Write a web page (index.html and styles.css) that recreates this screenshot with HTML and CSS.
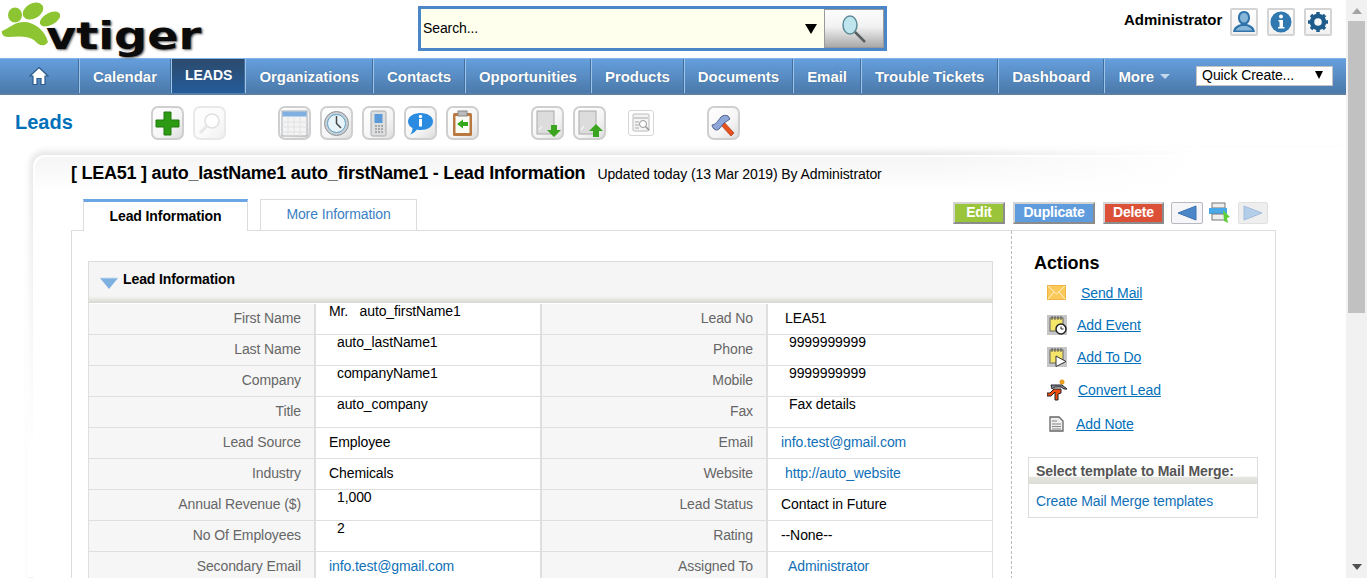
FILE: index.html
```html
<!DOCTYPE html>
<html lang="en">

<head>
    <meta charset="UTF-8">
    <meta name="viewport" content="width=device-width, initial-scale=1.0">
    <title>Leads - vtiger CRM</title>
    <link rel="stylesheet" href="styles.css">
</head>

<body>
    <div class="shell">
        <div class="main">
            <header class="top">
                <a class="logo">
                    <svg class="paw" width="60" height="50" viewBox="0 0 60 50">
                        <ellipse cx="15" cy="15" rx="7" ry="7.500" fill="#8cc432"/>
                        <ellipse cx="33" cy="11" rx="7.500" ry="11" fill="#8cc432" transform="rotate(60 33 11)"/>
                        <ellipse cx="50" cy="19" rx="6" ry="11" fill="#8cc432" transform="rotate(62 50 19)"/>
                        <path d="M2 31C10 28 14 22 24 22C34 22 45 30 48 42C44 48 38 45 34 40C26 35 16 37 8 37C4 37 1 34 2 31Z" fill="#8cc432"/>
                    </svg>
                    <span class="logo-text">vtiger</span>
                </a>
                <div class="search">
                    <span class="search-text">Search...</span>
                    <span class="search-arrow"></span>
                    <button class="search-btn">
                        <svg width="24" height="28" viewBox="0 0 24 28">
                            <ellipse cx="8" cy="10" rx="7" ry="9" fill="#bfe6ee" stroke="#5d8b98" stroke-width="1.500"/>
                            <path d="M13 17L23 27" stroke="#55605f" stroke-width="2.500"/>
                        </svg>
                    </button>
                </div>
                <div class="user">
                    <span class="user-name">Administrator</span>
                    <a class="user-icon">
                        <svg width="24" height="24" viewBox="0 0 24 24">
                            <path d="M12 1C17 1 18 5 18 8C18 11 16.500 13 15 14C18 15 22 16 23 22H1C2 16 6 15 9 14C7.500 13 6 11 6 8C6 5 7 1 12 1Z" fill="#2f73aa"/>
                            <path d="M12 3C15 3 16 5.500 16 8C16 10.500 14 12.500 12 12.500C10 12.500 8 10.500 8 8C8 5.500 9 3 12 3Z" fill="#86b6d8"/>
                            <path d="M3.500 20.500C4.500 18 7 17 9.500 16H14.500C17 17 19.500 18 20.500 20.500Z" fill="#86b6d8"/>
                        </svg>
                    </a>
                    <a class="user-icon">
                        <svg width="22" height="22" viewBox="0 0 22 22">
                            <circle cx="11" cy="11" r="10.500" fill="#2f78b0"/>
                            <circle cx="11" cy="5.500" r="2" fill="#fff"/>
                            <path d="M8.500 9H13V16H14.500V17.500H8V16H9.500V10.500H8.500Z" fill="#fff"/>
                        </svg>
                    </a>
                    <a class="user-icon">
                        <svg width="22" height="22" viewBox="0 0 22 22">
                            <circle cx="11" cy="11" r="6" fill="none" stroke="#1f5c8c" stroke-width="4.500"/>
                            <path d="M11 1V21M1 11H21M4 4L18 18M18 4L4 18" stroke="#1f5c8c" stroke-width="3.500" stroke-dasharray="4 12 4 0"/>
                        </svg>
                    </a>
                </div>
            </header>

            <nav class="nav">
                <a class="nav-home">
                    <svg width="20" height="20" viewBox="0 0 20 20">
                        <path d="M10 1.500L19 10H16V18.500H12V12.500H8V18.500H4V10H1Z" fill="#fff" stroke="#2c5a8a" stroke-width="1.200"/>
                    </svg>
                </a>
                <a class="nav-item">Calendar</a>
                <a class="nav-item active">LEADS</a>
                <a class="nav-item">Organizations</a>
                <a class="nav-item">Contacts</a>
                <a class="nav-item">Opportunities</a>
                <a class="nav-item">Products</a>
                <a class="nav-item">Documents</a>
                <a class="nav-item">Email</a>
                <a class="nav-item">Trouble Tickets</a>
                <a class="nav-item">Dashboard</a>
                <a class="nav-item more">More <span class="caret"></span></a>
                <div class="quick">
                    <span>Quick Create...</span>
                    <span class="quick-arrow"></span>
                </div>
            </nav>

            <div class="toolbar">
                <h1 class="module">Leads</h1>
                <div class="tools">
                    <a class="tool">
                        <svg width="25" height="25" viewBox="0 0 25 25"><path d="M9 1H16V9H24V16H16V24H9V16H1V9H9Z" fill="#2c9a12" stroke="#1e7a0c"/></svg>
                    </a>
                    <a class="tool faded">
                        <svg width="25" height="25" viewBox="0 0 25 25"><circle cx="15" cy="10" r="7" fill="#fff" stroke="#bbb" stroke-width="1.500"/><path d="M10 15L3 22" stroke="#ccc" stroke-width="3"/></svg>
                    </a>
                </div>
                <div class="tools group-b">
                    <a class="tool">
                        <svg width="27" height="27" viewBox="0 0 27 27"><rect x="1" y="1" width="25" height="25" fill="#f4f4f4" stroke="#a8adb2"/><rect x="1.500" y="1.500" width="24" height="5" fill="#7fb0e0"/><path d="M1 12H26M1 17H26M1 22H26M7 7V26M13 7V26M19 7V26" stroke="#e2e2e2"/></svg>
                    </a>
                    <a class="tool">
                        <svg width="27" height="27" viewBox="0 0 27 27"><circle cx="13.500" cy="13.500" r="12" fill="#c9ced2" stroke="#8d949a"/><circle cx="13.500" cy="13.500" r="9" fill="#e8f4fa" stroke="#5ea2c8"/><path d="M13.500 6V13.500L18 18" fill="none" stroke="#444" stroke-width="1.500"/></svg>
                    </a>
                    <a class="tool">
                        <svg width="27" height="27" viewBox="0 0 27 27"><rect x="6" y="1" width="15" height="25" rx="1.500" fill="#dcdedf" stroke="#a8aaac"/><rect x="9.500" y="4" width="8" height="9" fill="#5a9ad8"/><path d="M10 16H12M13 16H15M16 16H18M10 19H12M13 19H15M16 19H18M10 22H12M13 22H15M16 22H18" stroke="#999" stroke-width="1.500"/></svg>
                    </a>
                    <a class="tool">
                        <svg width="27" height="27" viewBox="0 0 27 27"><path d="M13.500 3C20.500 3 26 6.500 26 11.500C26 16.500 20.500 20 13.500 20C12 20 11 20 10 19.500C8 22 5.500 24 3 24.500C5 22.500 5.500 20 5.500 18C2.500 16.500 1 14 1 11.500C1 6.500 6.500 3 13.500 3Z" fill="#2b8be0"/><rect x="12" y="9" width="3" height="7.500" fill="#fff"/><circle cx="13.500" cy="6.500" r="1.700" fill="#fff"/></svg>
                    </a>
                    <a class="tool">
                        <svg width="27" height="27" viewBox="0 0 27 27"><rect x="4" y="3" width="19" height="23" rx="1.500" fill="#b9783f"/><rect x="6.500" y="6" width="14" height="17" fill="#fbfbf4"/><rect x="9" y="1" width="9" height="5" fill="#bbb" stroke="#888"/><path d="M8 14L14 9.500V12H19V16H14V18.500Z" fill="#35a81c"/></svg>
                    </a>
                </div>
                <div class="tools group-c">
                    <a class="tool">
                        <svg width="27" height="27" viewBox="0 0 27 27"><rect x="3" y="1" width="17" height="23" fill="#dcdcdc" stroke="#aaa"/><path d="M5 20L8 16" stroke="#fff"/><path d="M17 15H23V20H27L20 27L13 20H17Z" fill="#3ba51f"/></svg>
                    </a>
                    <a class="tool">
                        <svg width="27" height="27" viewBox="0 0 27 27"><rect x="3" y="1" width="17" height="23" fill="#dcdcdc" stroke="#aaa"/><path d="M5 20L8 16" stroke="#fff"/><path d="M20 14L27 21H23V27H17V21H13Z" fill="#3ba51f"/></svg>
                    </a>
                </div>
                <a class="tool-plain">
                    <svg width="20" height="20" viewBox="0 0 20 20"><rect x="2" y="1" width="16" height="17" rx="1" fill="#f4f4f4" stroke="#bbb"/><path d="M3 5H17M4 9H8M4 12H8M4 15H8" stroke="#aaa"/><circle cx="12" cy="11" r="3.500" fill="#fff" stroke="#999"/><path d="M14.500 13.500L18 17" stroke="#999" stroke-width="1.500"/></svg>
                </a>
                <a class="tool group-d">
                    <svg width="27" height="27" viewBox="0 0 27 27"><path d="M13 11L24 23L21 26L10 14Z" fill="#e8501e" stroke="#a83a14" stroke-width=".7"/><path d="M2 15C5 15 8 11 11 7C13 5 16 5 18 6L20 9L14 13L9 19C7 21 3 20 2 15Z" fill="#8ea6d8" stroke="#50608c"/></svg>
                </a>
            </div>

            <div class="panel-shade">
                <section class="panel">
                    <div class="record-title">
                        <h2 class="record-name">[ LEA51 ] auto_lastName1 auto_firstName1 - Lead Information</h2>
                        <span class="record-updated">Updated today (13 Mar 2019) By Administrator</span>
                    </div>

                    <div class="tabrow">
                        <a class="tab active">Lead Information</a>
                        <a class="tab">More Information</a>
                        <div class="rec-actions">
                            <button class="crm-btn green">Edit</button>
                            <button class="crm-btn blue">Duplicate</button>
                            <button class="crm-btn red">Delete</button>
                            <a class="pager">
                                <svg width="20" height="16" viewBox="0 0 20 16"><path d="M1 8L19 1V15Z" fill="#4a86c8" stroke="#3a72b2"/></svg>
                            </a>
                            <svg class="print-icon" width="21" height="22" viewBox="0 0 21 22"><rect x="3" y="1" width="13" height="5" fill="#eee" stroke="#777"/><rect x="0" y="6" width="18" height="6" fill="#49a8e8"/><rect x="3" y="12" width="13" height="6" fill="#eee" stroke="#777"/><path d="M14 8L21 15L18 16L19 21L15 19Z" fill="#5fd03a"/></svg>
                            <a class="pager off">
                                <svg width="20" height="16" viewBox="0 0 20 16"><path d="M19 8L1 1V15Z" fill="#b4cde8" stroke="#a0bcdc"/></svg>
                            </a>
                        </div>
                    </div>

                    <div class="detail">
                        <div class="detail-left">
                            <div class="block-head">
                                <svg width="18" height="12" viewBox="0 0 18 12"><path d="M0 1H18L9 12Z" fill="#7db0de"/><path d="M1 1H17" stroke="#c4dcf0"/></svg>
                                <span>Lead Information</span>
                            </div>
                            <table class="fields">
                                <colgroup>
                                    <col class="c1">
                                    <col class="c2">
                                    <col class="c3">
                                    <col class="c4">
                                </colgroup>
                                <tr>
                                    <td class="lbl first">First Name</td>
                                    <td class="val raw title-val">Mr. &nbsp; auto_firstName1</td>
                                    <td class="lbl">Lead No</td>
                                    <td class="val end pad4">LEA51</td>
                                </tr>
                                <tr>
                                    <td class="lbl first">Last Name</td>
                                    <td class="val raw">auto_lastName1</td>
                                    <td class="lbl">Phone</td>
                                    <td class="val raw end">9999999999</td>
                                </tr>
                                <tr>
                                    <td class="lbl first">Company</td>
                                    <td class="val raw">companyName1</td>
                                    <td class="lbl">Mobile</td>
                                    <td class="val raw end">9999999999</td>
                                </tr>
                                <tr>
                                    <td class="lbl first">Title</td>
                                    <td class="val raw">auto_company</td>
                                    <td class="lbl">Fax</td>
                                    <td class="val raw end">Fax details</td>
                                </tr>
                                <tr>
                                    <td class="lbl first">Lead Source</td>
                                    <td class="val">Employee</td>
                                    <td class="lbl">Email</td>
                                    <td class="val end"><a class="link">info.test@gmail.com</a></td>
                                </tr>
                                <tr>
                                    <td class="lbl first">Industry</td>
                                    <td class="val">Chemicals</td>
                                    <td class="lbl">Website</td>
                                    <td class="val end pad4"><a class="link">http://auto_website</a></td>
                                </tr>
                                <tr>
                                    <td class="lbl first">Annual Revenue ($)</td>
                                    <td class="val raw">1,000</td>
                                    <td class="lbl">Lead Status</td>
                                    <td class="val end">Contact in Future</td>
                                </tr>
                                <tr>
                                    <td class="lbl first">No Of Employees</td>
                                    <td class="val raw">2</td>
                                    <td class="lbl">Rating</td>
                                    <td class="val end">--None--</td>
                                </tr>
                                <tr>
                                    <td class="lbl first">Secondary Email</td>
                                    <td class="val"><a class="link">info.test@gmail.com</a></td>
                                    <td class="lbl">Assigned To</td>
                                    <td class="val end pad7"><a class="link">Administrator</a></td>
                                </tr>
                            </table>
                        </div>

                        <aside class="detail-right">
                            <h3 class="actions-title">Actions</h3>
                            <ul class="actions">
                                <li class="act-mail">
                                    <svg width="19" height="16" viewBox="0 0 19 16"><rect x=".5" y=".5" width="18" height="14" fill="#fbc95a" stroke="#eeb544"/><path d="M1 1L9.500 9L18 1M1 14L7 7M18 14L12 7" fill="none" stroke="#fff3cf"/></svg>
                                    <a>Send Mail</a>
                                </li>
                                <li>
                                    <svg width="20" height="20" viewBox="0 0 20 20"><rect width="20" height="20" fill="#c6c6c6"/><rect x="3" y="3" width="13" height="13" fill="#f5e66a" stroke="#666"/><path d="M5 1V5M8 1V5M11 1V5M14 1V5" stroke="#555"/><circle cx="14" cy="14" r="5" fill="#fff" stroke="#222" stroke-width="1.500"/><path d="M14 11.500V14H16.500" fill="none" stroke="#222"/></svg>
                                    <a>Add Event</a>
                                </li>
                                <li>
                                    <svg width="20" height="20" viewBox="0 0 20 20"><rect width="20" height="20" fill="#c6c6c6"/><rect x="3" y="3" width="13" height="13" fill="#f5e66a" stroke="#666"/><path d="M5 1V5M8 1V5M11 1V5M14 1V5" stroke="#555"/><path d="M9 9L19 14.500L9 19.500Z" fill="#fff" stroke="#333"/></svg>
                                    <a>Add To Do</a>
                                </li>
                                <li class="act-convert">
                                    <svg width="21" height="22" viewBox="0 0 21 22"><circle cx="15" cy="3" r="2.500" fill="#e8a020"/><path d="M4 6H15L20 10H17L14 8H8L5 10Z" fill="#889" stroke="#222"/><path d="M7 10H14V14L11 15V21H8V13L4 17H0V14H3Z" fill="#f04c10" stroke="#222"/></svg>
                                    <a>Convert Lead</a>
                                </li>
                                <li class="act-note">
                                    <svg width="15" height="16" viewBox="0 0 15 16"><path d="M1 1H10L14 5V15H1Z" fill="#eee" stroke="#666" stroke-width="1.300"/><path d="M3 5H8M3 8H12M3 10.500H12M3 13H12" stroke="#888"/></svg>
                                    <a>Add Note</a>
                                </li>
                            </ul>
                            <div class="merge">
                                <div class="merge-head">Select template to Mail Merge:</div>
                                <a class="merge-link">Create Mail Merge templates</a>
                            </div>
                        </aside>
                    </div>
                </section>
            </div>
        </div>

        <div class="scrollbar">
            <span class="sb-up"></span>
            <span class="sb-thumb"></span>
            <span class="sb-space"></span>
            <span class="sb-down"></span>
        </div>
    </div>
</body>

</html>
```

FILE: styles.css
```css
html, body {
    margin: 0;
    padding: 0;
    height: 100%;
    overflow: hidden;
}

body {
    font-family: "Liberation Sans", Arial, sans-serif;
    font-size: 14px;
    letter-spacing: -0.1px;
    color: #000;
    background-color: #fff;
}

a {
    cursor: pointer;
}

.shell {
    display: flex;
    height: 578px;
}

.main {
    width: 1346px;
    flex: none;
    overflow: hidden;
}

/* top strip */
.top {
    display: flex;
    height: 58px;
}

.logo {
    display: block;
    width: 418px;
    height: 58px;
    position: relative;
}

.paw {
    display: block;
}

.logo-text {
    position: absolute;
    left: 46px;
    top: 15px;
    font-family: "DejaVu Sans", sans-serif;
    font-weight: bold;
    font-size: 37px;
    line-height: 44px;
    letter-spacing: 0;
    color: #0b0b0b;
    transform: scaleX(1.25);
    transform-origin: left center;
    text-shadow: 1px 1px 2px #555;
}

.search {
    display: flex;
    align-items: center;
    box-sizing: border-box;
    width: 469px;
    height: 45px;
    margin-top: 6px;
    border: 3px solid #4a86c8;
    background-color: #ffffee;
}

.search-text {
    flex: 1;
    padding: 0 0 2px 2px;
}

.search-arrow {
    width: 0;
    height: 0;
    border-left: 6px solid transparent;
    border-right: 6px solid transparent;
    border-top: 10px solid #000;
    margin-right: 7px;
}

.search-btn {
    display: flex;
    align-items: center;
    justify-content: center;
    box-sizing: content-box;
    width: 58px;
    height: 37px;
    padding: 0;
    margin: 0;
    border: 1px solid #999;
    background: linear-gradient(#fdfdfd, #f2f2f2 45%, #a9a9a9);
}

.user {
    display: flex;
    align-items: flex-start;
    padding: 8px 0 0 237px;
    gap: 9px;
}

.user-name {
    font-size: 15px;
    font-weight: bold;
    line-height: 24px;
    letter-spacing: 0;
    white-space: nowrap;
    margin-right: -1px;
}

.user-icon {
    display: flex;
    align-items: center;
    justify-content: center;
    box-sizing: border-box;
    width: 28px;
    height: 28px;
    border: 2px solid #d4d4d4;
    border-radius: 2px;
    background: linear-gradient(#fff, #f1f1f1);
}

/* main menu */
.nav {
    display: flex;
    height: 37px;
    box-sizing: border-box;
    border-top: 1px solid #7fb4ea;
    border-bottom: 2px solid #5c7fa5;
    background: linear-gradient(#659fdd, #4b79aa);
}

.nav-home {
    display: flex;
    align-items: center;
    justify-content: center;
    width: 78px;
    box-sizing: border-box;
}

.nav-item {
    display: flex;
    align-items: center;
    padding: 0 13px;
    border-left: 1px solid #9fc4ea;
    box-shadow: -1px 0 0 #3f6e9f;
    margin-left: 1px;
    font-size: 15px;
    font-weight: bold;
    letter-spacing: -0.03px;
    color: #fff;
    text-shadow: 0 0 1px #33597f;
    white-space: nowrap;
}

.nav-item.active {
    padding: 0 12px 2px 13px;
    font-size: 14px;
    letter-spacing: 0;
    background: linear-gradient(#2c4a6c, #245c9a);
}

.caret {
    display: inline-block;
    width: 0;
    height: 0;
    margin-left: 6px;
    border-left: 5px solid transparent;
    border-right: 5px solid transparent;
    border-top: 5px solid #c4d8ec;
}

.quick {
    display: flex;
    align-items: center;
    justify-content: space-between;
    box-sizing: border-box;
    width: 137px;
    height: 20px;
    margin: 7px 0 0 13px;
    padding: 0 9px 2px 5px;
    border: 1px solid #c4c4c4;
    background-color: #fff;
    font-size: 14px;
}

.quick-arrow {
    width: 0;
    height: 0;
    border-left: 4px solid transparent;
    border-right: 4px solid transparent;
    border-top: 8px solid #000;
}

/* icon toolbar */
.toolbar {
    display: flex;
    align-items: flex-start;
    box-sizing: border-box;
    height: 52px;
    padding: 11px 0 0 15px;
}

.module {
    width: 136px;
    margin: 0;
    padding-top: 5px;
    font-size: 20px;
    line-height: 23px;
    font-weight: bold;
    letter-spacing: 0;
    color: #0070ba;
}

.tools {
    display: flex;
    gap: 9px;
}

.group-b,
.group-c {
    margin-left: 52px;
}

.tool {
    display: flex;
    align-items: center;
    justify-content: center;
    box-sizing: border-box;
    width: 33px;
    height: 34px;
    border: 2px solid #cfcfcf;
    border-radius: 7px;
    background: linear-gradient(135deg, #fff, #f5f5f5 60%, #dedede);
}

.tool.faded {
    opacity: 0.45;
}

.tool-plain {
    display: flex;
    align-items: center;
    justify-content: center;
    box-sizing: border-box;
    width: 26px;
    height: 26px;
    margin: 4px 0 0 22px;
    border: 1px solid #d6d6d6;
    border-radius: 3px;
}

.group-d {
    margin-left: 53px;
}

/* record panel */
.panel-shade {
    position: relative;
    padding: 8px 0 0 6px;
    margin-left: 27px;
}

/* shadow dies out toward the right and downward */
.panel-shade::after {
    content: "";
    position: absolute;
    top: 0;
    right: 0;
    width: 420px;
    height: 44px;
    background: linear-gradient(to right, rgba(255, 255, 255, 0), #fff 65%);
}

.panel-shade::before {
    content: "";
    position: absolute;
    top: 30px;
    left: 0;
    width: 6px;
    height: 400px;
    z-index: 1;
    background: linear-gradient(rgba(255, 255, 255, 0), #fff 70%);
}

.panel {
    box-sizing: border-box;
    height: 500px;
    padding: 6px 70px 0 36px;
    border: 2px solid #fff;
    border-bottom: 0;
    border-right: 0;
    border-radius: 12px 0 0 0;
    background: linear-gradient(#f5f5f5, #fff 36px);
    box-shadow: -1px -2px 6px 2px #e6e6e6;
}

.record-title {
    display: flex;
    align-items: baseline;
    gap: 12px;
    height: 21px;
    position: relative;
    z-index: 1;
}

.record-name {
    margin: 0;
    font-size: 18px;
    line-height: 21px;
    font-weight: bold;
    letter-spacing: -0.25px;
}

.tabrow {
    display: flex;
    align-items: flex-start;
    height: 32px;
    margin-top: 15px;
    padding-left: 12px;
    position: relative;
    z-index: 1;
}

.tab {
    display: flex;
    align-items: center;
    justify-content: center;
    box-sizing: border-box;
    width: 157px;
    height: 31px;
    margin-left: 12px;
    padding-bottom: 3px;
    border: 1px solid #dcdcdc;
    border-bottom: 0;
    color: #3a80c4;
    background-color: #fff;
}

.tab.active {
    width: 165px;
    height: 32px;
    margin-left: 0;
    padding-bottom: 2px;
    border-top: 3px solid #6aa5e6;
    color: #000;
    font-weight: bold;
    position: relative;
    z-index: 1;
}

.rec-actions {
    display: flex;
    align-items: center;
    margin: 3px 0 0 auto;
    padding-right: 8px;
    height: 22px;
}

.crm-btn {
    box-sizing: border-box;
    height: 22px;
    padding: 0 0 2px;
    margin-right: 8px;
    border: 2px solid;
    border-color: #d4d4d4 #8c8c8c #8c8c8c #d4d4d4;
    font-family: inherit;
    font-size: 14px;
    font-weight: bold;
    line-height: 16px;
    letter-spacing: -0.2px;
    color: #fff;
}

.green {
    width: 52px;
    background-color: #9ac53a;
}

.blue {
    width: 82px;
    background-color: #5f9cde;
}

.red {
    width: 61px;
    margin-right: 7px;
    background-color: #dc5038;
}

.pager {
    display: flex;
    align-items: center;
    justify-content: center;
    box-sizing: border-box;
    width: 32px;
    height: 22px;
    border: 1px solid #b8b8c0;
    border-radius: 2px;
    background: #f6f6f8;
}

.pager.off {
    width: 30px;
    border-color: #e0e0e0;
    background: #eeeeee;
}

.print-icon {
    margin: 0 8px 0 6px;
}

.detail {
    display: flex;
    box-sizing: border-box;
    height: 400px;
    margin-top: -1px;
    border: 1px solid #dcdcdc;
    background-color: #fff;
}

.detail-left {
    box-sizing: border-box;
    width: 940px;
    padding: 30px 17px 0 16px;
    border-right: 1px dashed #bbb;
}

.block-head {
    display: flex;
    align-items: flex-start;
    box-sizing: border-box;
    width: 905px;
    height: 43px;
    padding: 9px 0 0 11px;
    border: 1px solid #dcdcdc;
    border-bottom: 0;
    background: linear-gradient(#f5f5f5 80%, #f0f0ec 84%, #d8d8d2 97%, #fff 97%);
    font-weight: bold;
    line-height: 16px;
}

.block-head svg {
    margin: 6px 5px 0 0;
}

.fields {
    table-layout: fixed;
    width: 905px;
    border-collapse: separate;
    border-spacing: 0;
}

.c1 {
    width: 228px;
}

.c2, .c3 {
    width: 226px;
}

.c4 {
    width: 225px;
}

.fields td {
    box-sizing: border-box;
    height: 31px;
    padding: 0 0 2px;
    border-bottom: 1px solid #dfdfdf;
    white-space: nowrap;
}

.fields .lbl {
    padding-right: 13px;
    border-right: 2px solid #dfdfdf;
    background-color: #f6f6f6;
    color: #666;
    text-align: right;
}

.fields .first {
    border-left: 1px solid #dfdfdf;
}

.fields .val {
    padding-left: 13px;
    border-right: 2px solid #dfdfdf;
}

.fields .val.end {
    border-right: 1px solid #dfdfdf;
}

.fields .raw {
    padding-left: 21px;
    vertical-align: top;
    line-height: 14px;
}

.fields .title-val {
    padding-left: 13px;
}

.fields .pad4 {
    padding-left: 17px;
}

.fields .pad7 {
    padding-left: 20px;
}

.link {
    color: #0f70b7;
}

/* right column */
.detail-right {
    flex: 1;
    padding: 22px 0 0 22px;
}

.actions-title {
    margin: 0;
    font-size: 18px;
    line-height: 21px;
    font-weight: bold;
}

.actions {
    list-style: none;
    margin: 3px 0 0;
    padding: 0 0 0 13px;
}

.actions li {
    display: flex;
    align-items: center;
    height: 32px;
}

.actions a {
    margin-left: 10px;
    color: #0070ba;
    text-decoration: underline;
}

.actions .act-mail a {
    margin-left: 15px;
}

.actions .act-convert,
.actions .act-note {
    height: 34px;
}

.act-note svg {
    margin-left: 2px;
}

.actions .act-note a {
    margin-left: 12px;
}

.merge {
    box-sizing: border-box;
    width: 230px;
    height: 61px;
    margin: 16px 0 0 -6px;
    border: 1px solid #dcdcdc;
}

.merge-head {
    height: 26px;
    box-sizing: border-box;
    padding: 5px 0 0 7px;
    font-weight: bold;
    line-height: 16px;
    color: #555;
    background: linear-gradient(#fff 70%, #e6e6e0 74%, #dcdcd6);
}

.merge-link {
    display: block;
    padding: 9px 0 0 7px;
    line-height: 17px;
    color: #0f70b7;
}

/* page scrollbar */
.scrollbar {
    flex: 1;
    display: flex;
    flex-direction: column;
    align-items: center;
    background-color: #f1f1f1;
}

.sb-up {
    width: 0;
    height: 0;
    margin: 8px 0 7px;
    border-left: 5px solid transparent;
    border-right: 5px solid transparent;
    border-bottom: 6px solid #a3a3a3;
}

.sb-thumb {
    width: 17px;
    height: 292px;
    background-color: #c1c1c1;
}

.sb-space {
    flex: 1;
}

.sb-down {
    width: 0;
    height: 0;
    margin-bottom: 8px;
    border-left: 5px solid transparent;
    border-right: 5px solid transparent;
    border-top: 6px solid #505050;
}
```
